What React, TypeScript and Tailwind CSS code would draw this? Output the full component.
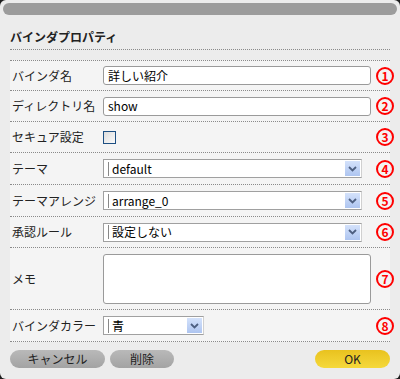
import React from "react";

const font = { fontFamily: '"Noto Sans CJK JP", "Noto Sans", sans-serif' };

function Num({ n }: { n: number }) {
  return (
    <span className="ml-auto mr-[-4px] flex h-[18px] w-[18px] shrink-0 items-center justify-center rounded-full border-2 border-[#ff0000] text-[12px] leading-none font-bold text-[#ff0000]">
      {n}
    </span>
  );
}

function Row({ label, h, n, children }: { label: string; h: string; n: number; children: React.ReactNode }) {
  return (
    <div className={`flex items-center border-b border-dotted border-[#8a8a8a] pl-[2px] ${h}`}>
      <span className="w-[91px] shrink-0 text-[12px] text-[#222]">{label}</span>
      {children}
      <Num n={n} />
    </div>
  );
}

function TextBox({ value }: { value: string }) {
  return (
    <div className="flex h-[19px] w-[268px] shrink-0 items-center rounded-[3px] border border-[#9a9a9a] bg-white px-[4px] text-[12px] text-black">
      {value}
    </div>
  );
}

function Select({ value, w }: { value: string; w: string }) {
  return (
    <div className={`flex h-[19px] shrink-0 items-center border border-[#a0a0a0] border-r-[#d0d0d0] bg-white pl-[4px] pr-[1px] text-[12px] text-black ${w}`}>
      <span className="border-l border-[#888] pl-[3px] leading-[14px]">{value}</span>
      <span className="ml-auto flex h-[15px] w-[15px] items-center justify-center bg-gradient-to-b from-[#d4e2fb] to-[#aec5f0]">
        <svg width="9" height="6" viewBox="0 0 9 6">
          <path d="M1 1 L4.5 4.5 L8 1" fill="none" stroke="#4d5f80" strokeWidth="1.8" />
        </svg>
      </span>
    </div>
  );
}

export default function App() {
  return (
    <div className="h-[379px] w-[400px] bg-[#1e1e1e]" style={font}>
      <div className="flex h-full flex-col rounded-[6px] bg-[#ececec] px-[3px] pt-[3px]">
        <div className="h-[12px] rounded-full bg-[#9c9c9c]" />
        <div className="mx-[7px] mt-[14px] border-b border-dotted border-[#8a8a8a] pb-[4px] text-[12px] font-bold leading-[16px] text-[#222]">
          バインダプロパティ
        </div>
        <div className="mx-[7px] mt-[10px] border-t border-dotted border-[#8a8a8a] bg-[#f4f4f4]">
          <Row label="バインダ名" h="h-[30px]" n={1}>
            <TextBox value="詳しい紹介" />
          </Row>
          <Row label="ディレクトリ名" h="h-[31px]" n={2}>
            <TextBox value="show" />
          </Row>
          <Row label="セキュア設定" h="h-[31px]" n={3}>
            <span className="h-[13px] w-[13px] shrink-0 border border-[#1d4f82] bg-gradient-to-br from-[#dcdcdc] to-[#fafafa]" />
          </Row>
          <Row label="テーマ" h="h-[32px]" n={4}>
            <Select value="default" w="w-[259px]" />
          </Row>
          <Row label="テーマアレンジ" h="h-[32px]" n={5}>
            <Select value="arrange_0" w="w-[259px]" />
          </Row>
          <Row label="承認ルール" h="h-[31px]" n={6}>
            <Select value="設定しない" w="w-[259px]" />
          </Row>
          <Row label="メモ" h="h-[62px]" n={7}>
            <div className="h-[50px] w-[268px] shrink-0 rounded-[3px] border border-[#9a9a9a] bg-white" />
          </Row>
          <Row label="バインダカラー" h="h-[32px]" n={8}>
            <Select value="青" w="w-[101px]" />
          </Row>
        </div>
        <div className="mx-[7px] mt-[8px] flex items-center gap-[5px]">
          <button className="h-[18px] w-[95px] rounded-full bg-gradient-to-b from-[#b9b9b9] to-[#a3a3a3] text-[12px] leading-none text-[#222]">
            キャンセル
          </button>
          <button className="h-[18px] w-[64px] rounded-full bg-gradient-to-b from-[#b9b9b9] to-[#a3a3a3] text-[12px] leading-none text-[#222]">
            削除
          </button>
          <button className="ml-auto h-[18px] w-[75px] rounded-full bg-gradient-to-b from-[#e9c21e] to-[#f5d93a] text-[12px] leading-none text-[#222]">
            OK
          </button>
        </div>
      </div>
    </div>
  );
}
